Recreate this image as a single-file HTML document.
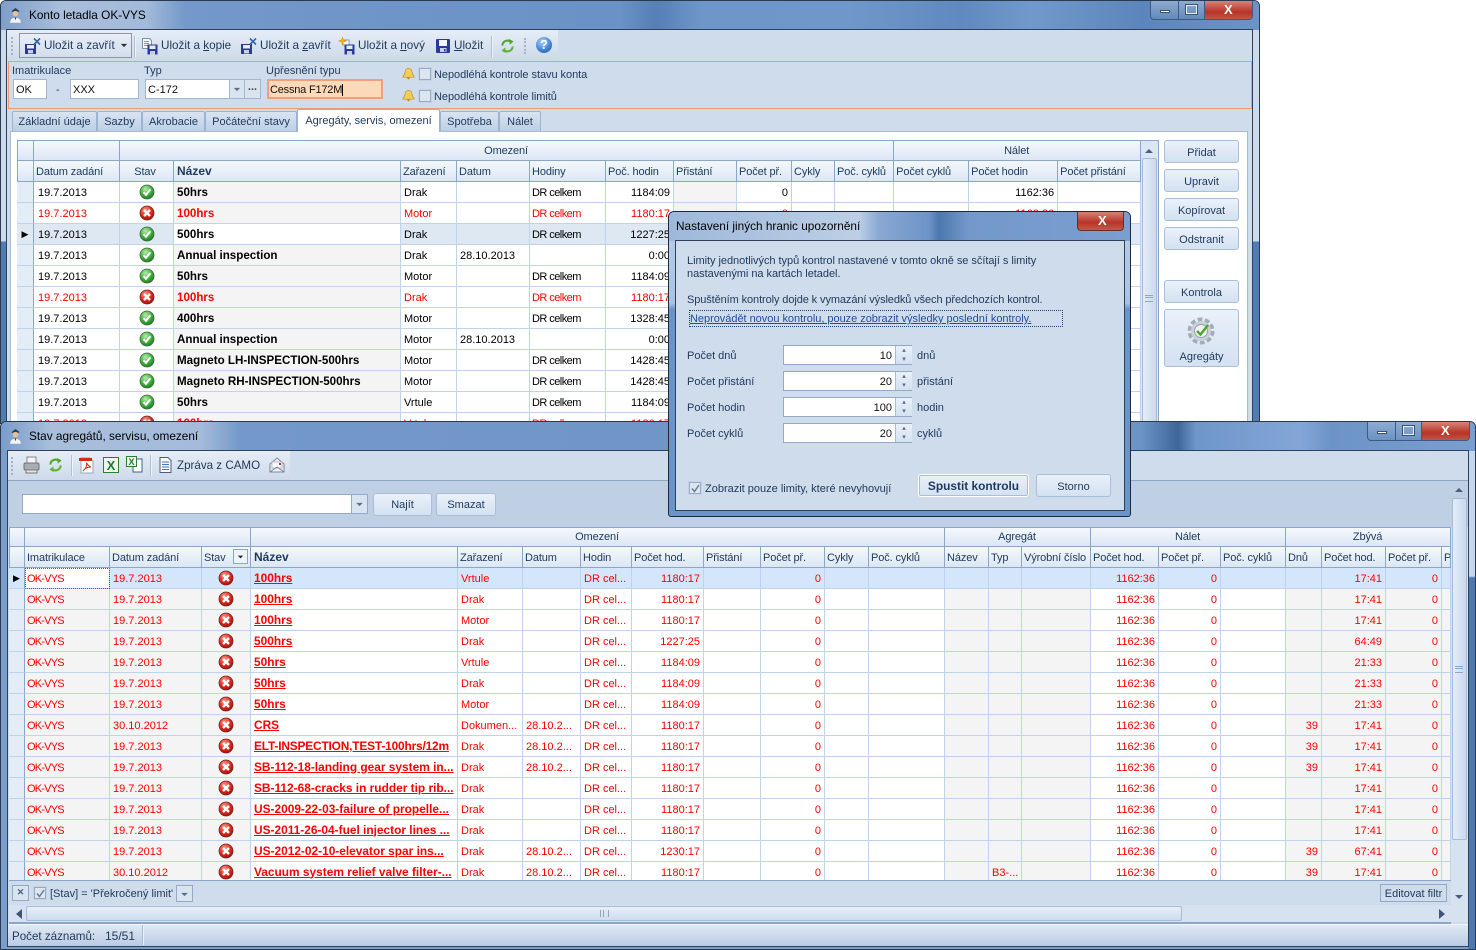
<!DOCTYPE html>
<html lang="cs"><head><meta charset="utf-8"><title>Konto letadla OK-VYS</title>
<style>
html,body{margin:0;padding:0;background:#fff;width:1476px;height:950px;overflow:hidden}
body{position:relative;font:11px/13px "Liberation Sans",sans-serif;color:#1e395b}
.a,.t,.in,.b,.x{position:absolute}
.t{white-space:nowrap}
.tb{font-size:11.7px}
.win{position:absolute;overflow:hidden;border:1px solid #2b3a4e;box-sizing:border-box}
.in{background:#fff;border:1px solid #a2b6d0;box-sizing:border-box;height:20px;line-height:18px;padding-left:2px;padding-top:1px;color:#111;white-space:nowrap}
.b{background:linear-gradient(#eaf1f9,#d3e1f1);border:1px solid #a9bfd9;border-radius:3px;box-sizing:border-box;text-align:center;height:23px;line-height:23px;color:#1e395b}
.cb{position:absolute;width:12px;height:12px;box-sizing:border-box;border:1px solid #93aac8;background:#dde5ef;outline:1px solid #c5d3e5;outline-offset:0}
.grip{position:absolute;width:2px;border-left:2px dotted #9fb3cf}
.sep{position:absolute;width:1px;background:#aebfd6;border-right:1px solid #eef3f9}
svg{display:block}
svg.a{position:absolute}
table{position:absolute;border-collapse:separate;border-spacing:0;table-layout:fixed;color:#000;background:#fff}
td,th{box-sizing:border-box;height:21px;padding:2px 3px 0;overflow:hidden;white-space:nowrap;font-weight:normal;text-align:left;border-right:1px solid #bfd3ee;border-bottom:1px solid #bfd3ee}
th{background:linear-gradient(#f4f8fc,#dce7f4);border-right:1px solid #8ca6c8;border-bottom:1px solid #8ca6c8;color:#1e395b;padding-left:2px;letter-spacing:-.12px}
th.c{text-align:center}
th.bn{font-weight:bold;font-size:12px;padding:0 3px;letter-spacing:0}
tr.h1 th{height:20px;border-top:1px solid #8ca6c8;padding-top:0}
#g1 tr.h1 th{height:21px;padding-top:1px}
td.i{background:#e3ecf7;border-right:1px solid #8ca6c8;padding:0}
td.g{background:#f4f4f4}
td.r{text-align:right}
td.c{text-align:center;padding:0}
td.c svg{display:inline-block;vertical-align:middle;width:16px;height:16px}
td.n{font-weight:bold;font-size:11.6px;padding-top:0}
#g1 td:nth-child(2){padding-left:4px}
#g1 td:nth-child(7){letter-spacing:-.55px;padding-left:2px}
tr.e td{color:#f00}
tr.s td{background:#dde8f3}
tr.s td.n{background:#fff}
#g2 tr.s td{background:#d4e6fc}
#g2 td.n{text-decoration:underline;padding-right:0;font-size:11.9px}
#g2 td{color:#f00}
#g2 td:nth-child(2){letter-spacing:-.8px;padding-left:2px}
.tab{position:absolute;top:111px;height:20px;background:linear-gradient(#d9e4f1,#bccfe5);border:1px solid #9db4d1;border-bottom:0;box-sizing:border-box;text-align:center;line-height:21px;border-radius:2px 2px 0 0}
.sb{position:absolute;background:linear-gradient(90deg,#e4edf7,#c9d9ec);border:1px solid #a5bbd6;border-radius:2px;box-sizing:border-box}
.mx{left:35px;top:5px;width:11px;height:9px;border:1px solid #e8eef6;outline:1px solid #39506f;box-sizing:border-box}
</style></head><body>
<svg width="0" height="0" style="position:absolute"><defs>
<radialGradient id="gg" cx=".4" cy=".3" r=".8"><stop offset="0" stop-color="#b6ecaa"/><stop offset=".55" stop-color="#3fae3a"/><stop offset="1" stop-color="#14701c"/></radialGradient>
<radialGradient id="gr" cx=".4" cy=".3" r=".8"><stop offset="0" stop-color="#ff9a8a"/><stop offset=".55" stop-color="#e0251a"/><stop offset="1" stop-color="#8e0f0a"/></radialGradient>
<symbol id="o" viewBox="0 0 16 16"><circle cx="8" cy="8" r="7" fill="url(#gg)" stroke="#3c6b3c" stroke-width=".8"/><path d="M4.6 8.2l2.4 2.6 4.4-5.600" stroke="#fff" stroke-width="2" fill="none"/></symbol>
<symbol id="e" viewBox="0 0 16 16"><circle cx="8" cy="8" r="7" fill="url(#gr)" stroke="#6e2a25" stroke-width=".8"/><path d="M5 5l6 6M11 5l-6 6" stroke="#fff" stroke-width="2.400" fill="none"/></symbol>
<symbol id="f" viewBox="0 0 16 16"><rect x="1" y="1" width="14" height="14" rx="1" fill="#2a3a9a"/><rect x="4" y="2" width="8" height="6" fill="#f4f6fb"/><rect x="5" y="10" width="6.500" height="4" fill="#c6cfe6"/><rect x="9" y="11" width="1.500" height="2.500" fill="#2a3a9a"/></symbol>
<symbol id="sx" viewBox="0 0 18 18"><rect x="1" y="7" width="11" height="10" fill="#2a3a9a"/><rect x="3" y="8" width="7" height="3.500" fill="#e8ecf6"/><rect x="4" y="13" width="5" height="3.500" fill="#c6cfe6"/><path d="M10 1.500l6 6M16 1.500l-6 6" stroke="#33649f" stroke-width="1.600"/></symbol>
<symbol id="sc" viewBox="0 0 18 18"><path d="M1.500 1.500h7l2 2v8h-9z" fill="#f4f7fb" stroke="#7d8fa8"/><path d="M3 4.500h5M3 6.500h5M3 8.500h4" stroke="#6f9bcc"/><rect x="6.500" y="7.500" width="10" height="10" fill="#2a3a9a"/><rect x="8.500" y="8.500" width="6" height="3.500" fill="#e8ecf6"/><rect x="9" y="14" width="5" height="3.500" fill="#c6cfe6"/></symbol>
<symbol id="sn" viewBox="0 0 18 18"><path d="M5 3h6v5H5z" fill="#fff" stroke="#8798b0"/><rect x="6.500" y="7.500" width="10" height="10" fill="#2a3a9a"/><rect x="8.500" y="8.500" width="6" height="3.500" fill="#e8ecf6"/><rect x="9" y="14" width="5" height="3.500" fill="#c6cfe6"/><path d="M4.500 0l1 3 3 1-3 1-1 3-1-3-3-1 3-1z" fill="#f7b500" stroke="#e88a00" stroke-width=".5"/></symbol>
<symbol id="rf" viewBox="0 0 16 16"><path d="M2.500 7.500A5.500 5.500 0 0 1 11.500 3.500" stroke="#4da82c" stroke-width="2.200" fill="none"/><path d="M9.500 0.500l5 2.500-4 3.500z" fill="#4da82c"/><path d="M13.500 8.500A5.500 5.500 0 0 1 4.500 12.500" stroke="#5eb636" stroke-width="2.200" fill="none"/><path d="M6.500 15.500l-5-2.500 4-3.500z" fill="#5eb636"/></symbol>
<symbol id="bl" viewBox="0 0 14 14"><path d="M7 1.500c-2.500 0-3.800 1.900-3.800 4.200 0 2.200-1 3-2.200 4.100v1.200h12V9.800c-1.200-1.100-2.200-1.900-2.200-4.100C10.800 3.400 9.500 1.500 7 1.500z" fill="#f5cc55" stroke="#b98a1e" stroke-width=".7"/><circle cx="7" cy="12" r="1.300" fill="#c2901f"/></symbol>
<symbol id="pi" viewBox="0 0 16 18"><path d="M4 4l4-3 4 3v1H4z" fill="#2c3e55"/><circle cx="8" cy="7" r="3" fill="#e6bf9b"/><path d="M2 17c0-4 2.500-6 6-6s6 2 6 6z" fill="#f1f3f6" stroke="#9aa6b6" stroke-width=".6"/><path d="M7 11l1 3 1-3z" fill="#2c3e55"/></symbol>
<symbol id="ar" viewBox="0 0 10 6"><path d="M1 1h8L5 5z" fill="currentColor"/></symbol>
</defs></svg>

<!-- WINDOW 1 -->
<div class="win" style="left:0;top:0;width:1260px;height:424px;border-radius:6px 6px 0 0;background:linear-gradient(#cbdaec 0,#cbdaec 240px,#4f7cb5 241px,#4f7cb5 100%)">
 <div class="a" style="left:0;top:0;width:100%;height:29px;background:linear-gradient(90deg,#7e9ec9 0,#a8bedb 60px,#a3bada 145px,#7398c9 185px,#6a92c6 620px,#557fb5 655px,#6e96c9 700px,#7097c9 850px,#5f89bf 960px,#7199cb 1030px,#5c85bb 1140px,#6d94c7 1259px)"></div>
 <svg class="a" style="left:7px;top:6px" width="15" height="17"><use href="#pi"/></svg>
 <div class="t" style="left:28px;top:8px;font-size:11.8px;color:#000">Konto letadla OK-VYS</div>
 <div class="a" style="left:1149px;top:-1px;width:103px;height:20px;border:1px solid #3f5a80;border-top:0;border-radius:0 0 4px 4px;box-sizing:border-box;overflow:hidden;background:linear-gradient(#8fadd3,#6289ba)">
  <div class="a" style="left:54px;top:0;width:48px;height:20px;background:linear-gradient(#d98a80,#b73426 60%,#c05a4d)"></div>
  <div class="a" style="left:27px;top:0;width:1px;height:20px;background:#3f5a80"></div>
  <div class="a" style="left:53px;top:0;width:1px;height:20px;background:#3f5a80"></div>
  <div class="a" style="left:9px;top:10px;width:10px;height:3px;background:#fff;border:1px solid #39506f;box-sizing:border-box"></div>
  <div class="a mx"></div>
  <div class="t" style="left:73px;top:3px;font:bold 13px/13px 'Liberation Sans',sans-serif;color:#fff">X</div>
 </div>
 <!-- inner -->
 <div class="a" style="left:5px;top:28px;width:1247px;height:400px;background:#cfdcec;border:1px solid #2f4159;box-sizing:border-box"></div>
 <div class="a" style="left:6px;top:29px;width:551px;height:30px;background:linear-gradient(#e6edf6,#cddaea)"></div>
 <div class="grip" style="left:10px;top:36px;height:18px"></div>
 <div class="a" style="left:18px;top:32px;width:113px;height:25px;border:1px solid #8d96a1;box-sizing:border-box;background:linear-gradient(#e8eef6,#d3deec)"></div>
 <svg class="a" style="left:23px;top:36px" width="18" height="18"><use href="#sx"/></svg>
 <div class="t tb" style="left:43px;top:38px">Uložit a zavřít</div>
 <svg class="a" style="left:119px;top:42px;color:#333" width="8" height="5"><use href="#ar"/></svg>
 <div class="sep" style="left:133px;top:35px;height:21px"></div>
 <svg class="a" style="left:140px;top:36px" width="18" height="18"><use href="#sc"/></svg>
 <div class="t tb" style="left:160px;top:38px">Uložit a <u>k</u>opie</div>
 <svg class="a" style="left:239px;top:36px" width="18" height="18"><use href="#sx"/></svg>
 <div class="t tb" style="left:259px;top:38px">Uložit a <u>z</u>avřít</div>
 <svg class="a" style="left:337px;top:36px" width="18" height="18"><use href="#sn"/></svg>
 <div class="t tb" style="left:357px;top:38px">Uložit a <u>n</u>ový</div>
 <svg class="a" style="left:434px;top:37px" width="16" height="16"><use href="#f"/></svg>
 <div class="t tb" style="left:453px;top:38px"><u>U</u>ložit</div>
 <div class="sep" style="left:490px;top:35px;height:21px"></div>
 <svg class="a" style="left:499px;top:37px" width="15" height="16"><use href="#rf"/></svg>
 <div class="grip" style="left:523px;top:37px;height:16px"></div>
 <div class="a" style="left:535px;top:36px;width:16px;height:16px;border-radius:50%;background:radial-gradient(circle at 40% 30%,#a9d2f7,#3b7fd0 60%,#1d5aa6);color:#fff;font:bold 13px/16px 'Liberation Sans',sans-serif;text-align:center">?</div>
 <!-- orange panel -->
 <div class="a" style="left:7px;top:60px;width:1244px;height:48px;border:1px solid #ef9a72;box-sizing:border-box"></div>
 <div class="t" style="left:11px;top:64px">Imatrikulace</div>
 <div class="in" style="left:12px;top:78px;width:34px">OK</div>
 <div class="t" style="left:55px;top:83px">-</div>
 <div class="in" style="left:69px;top:78px;width:69px">XXX</div>
 <div class="t" style="left:143px;top:64px">Typ</div>
 <div class="in" style="left:144px;top:78px;width:100px">C-172</div>
 <div class="in" style="left:228px;top:78px;width:16px;background:#d9e4f1;padding:0"><svg class="a" style="left:3px;top:7px;color:#5a6f8e" width="8" height="5"><use href="#ar"/></svg></div>
 <div class="in" style="left:243px;top:78px;width:17px;background:#d9e4f1;padding:0;text-align:center;line-height:14px;font-weight:bold;color:#445">...</div>
 <div class="t" style="left:265px;top:64px">Upřesnění typu</div>
 <div class="in" style="left:266px;top:78px;width:116px;background:#fcd9b8;border:2px solid #f0a077;line-height:16px;padding-left:1px;padding-top:1px;letter-spacing:-.2px">Cessna F172M<span style="border-left:1px solid #000"></span></div>
 <svg class="a" style="left:401px;top:66px" width="13" height="13"><use href="#bl"/></svg>
 <div class="cb" style="left:418px;top:67px"></div>
 <div class="t" style="left:433px;top:68px;letter-spacing:-.05px">Nepodléhá kontrole stavu konta</div>
 <svg class="a" style="left:401px;top:88px" width="13" height="13"><use href="#bl"/></svg>
 <div class="cb" style="left:418px;top:89px"></div>
 <div class="t" style="left:433px;top:90px;letter-spacing:-.05px">Nepodléhá kontrole limitů</div>
 <!-- tabs -->
 <div class="a" style="left:9px;top:130px;width:1238px;height:300px;background:#fff;border:1px solid #a5bbd6;box-sizing:border-box"></div>
 <div class="tab" style="left:11px;width:85px;top:110px">Základní údaje</div>
 <div class="tab" style="left:96px;width:45px;top:110px">Sazby</div>
 <div class="tab" style="left:141px;width:63px;top:110px">Akrobacie</div>
 <div class="tab" style="left:204px;width:92px;top:110px">Počáteční stavy</div>
 <div class="tab" style="left:296px;width:143px;top:108px;height:23px;background:#fff;line-height:22px;z-index:2">Agregáty, servis, omezení</div>
 <div class="tab" style="left:439px;width:59px;top:110px">Spotřeba</div>
 <div class="tab" style="left:498px;width:42px;top:110px">Nálet</div>
 <!-- grid 1 -->
 <table id="g1" style="left:16px;top:139px;width:1124px">
 <colgroup><col style="width:17px"><col style="width:86px"><col style="width:54px"><col style="width:227px"><col style="width:56px"><col style="width:73px"><col style="width:76px"><col style="width:68px"><col style="width:63px"><col style="width:55px"><col style="width:43px"><col style="width:59px"><col style="width:75px"><col style="width:89px"><col style="width:83px"></colgroup>
 <tr class="h1"><th style="border-left:1px solid #8ca6c8"></th><th></th><th class="c" colspan="10">Omezení</th><th class="c" colspan="3">Nálet</th></tr>
 <tr><th style="border-left:1px solid #8ca6c8"></th><th>Datum zadání</th><th class="c" style="padding-right:5px">Stav</th><th class="bn">Název</th><th>Zařazení</th><th>Datum</th><th>Hodiny</th><th>Poč. hodin</th><th>Přistání</th><th>Počet př.</th><th>Cykly</th><th>Poč. cyklů</th><th>Počet cyklů</th><th>Počet hodin</th><th>Počet přistání</th></tr>
 <tr><td class="i"></td><td>19.7.2013</td><td class="c"><svg><use href="#o"/></svg></td><td class="n g">50hrs</td><td>Drak</td><td></td><td>DR celkem</td><td class="r">1184:09</td><td class="g"></td><td class="r">0</td><td></td><td></td><td></td><td class="r">1162:36</td><td></td></tr>
 <tr class="e"><td class="i"></td><td>19.7.2013</td><td class="c"><svg><use href="#e"/></svg></td><td class="n g">100hrs</td><td>Motor</td><td></td><td>DR celkem</td><td class="r">1180:17</td><td class="g"></td><td class="r">0</td><td></td><td></td><td></td><td class="r">1162:36</td><td></td></tr>
 <tr class="s"><td class="i" style="text-align:center;font-size:9px;color:#000">&#9654;</td><td>19.7.2013</td><td class="c"><svg><use href="#o"/></svg></td><td class="n">500hrs</td><td>Drak</td><td></td><td>DR celkem</td><td class="r">1227:25</td><td></td><td></td><td></td><td></td><td></td><td></td><td></td></tr>
 <tr><td class="i"></td><td>19.7.2013</td><td class="c"><svg><use href="#o"/></svg></td><td class="n g">Annual inspection</td><td>Drak</td><td>28.10.2013</td><td></td><td class="r">0:00</td><td class="g"></td><td></td><td></td><td></td><td></td><td></td><td></td></tr>
 <tr><td class="i"></td><td>19.7.2013</td><td class="c"><svg><use href="#o"/></svg></td><td class="n g">50hrs</td><td>Motor</td><td></td><td>DR celkem</td><td class="r">1184:09</td><td class="g"></td><td></td><td></td><td></td><td></td><td></td><td></td></tr>
 <tr class="e"><td class="i"></td><td>19.7.2013</td><td class="c"><svg><use href="#e"/></svg></td><td class="n g">100hrs</td><td>Drak</td><td></td><td>DR celkem</td><td class="r">1180:17</td><td class="g"></td><td></td><td></td><td></td><td></td><td></td><td></td></tr>
 <tr><td class="i"></td><td>19.7.2013</td><td class="c"><svg><use href="#o"/></svg></td><td class="n g">400hrs</td><td>Motor</td><td></td><td>DR celkem</td><td class="r">1328:45</td><td class="g"></td><td></td><td></td><td></td><td></td><td></td><td></td></tr>
 <tr><td class="i"></td><td>19.7.2013</td><td class="c"><svg><use href="#o"/></svg></td><td class="n g">Annual inspection</td><td>Motor</td><td>28.10.2013</td><td></td><td class="r">0:00</td><td class="g"></td><td></td><td></td><td></td><td></td><td></td><td></td></tr>
 <tr><td class="i"></td><td>19.7.2013</td><td class="c"><svg><use href="#o"/></svg></td><td class="n g">Magneto LH-INSPECTION-500hrs</td><td>Motor</td><td></td><td>DR celkem</td><td class="r">1428:45</td><td class="g"></td><td></td><td></td><td></td><td></td><td></td><td></td></tr>
 <tr><td class="i"></td><td>19.7.2013</td><td class="c"><svg><use href="#o"/></svg></td><td class="n g">Magneto RH-INSPECTION-500hrs</td><td>Motor</td><td></td><td>DR celkem</td><td class="r">1428:45</td><td class="g"></td><td></td><td></td><td></td><td></td><td></td><td></td></tr>
 <tr><td class="i"></td><td>19.7.2013</td><td class="c"><svg><use href="#o"/></svg></td><td class="n g">50hrs</td><td>Vrtule</td><td></td><td>DR celkem</td><td class="r">1184:09</td><td class="g"></td><td></td><td></td><td></td><td></td><td></td><td></td></tr>
 <tr class="e"><td class="i"></td><td>19.7.2013</td><td class="c"><svg><use href="#e"/></svg></td><td class="n g">100hrs</td><td>Vrtule</td><td></td><td>DR celkem</td><td class="r">1180:17</td><td class="g"></td><td></td><td></td><td></td><td></td><td></td><td></td></tr>
 </table>
 <!-- scrollbar 1 -->
 <div class="a" style="left:1140px;top:139px;width:18px;height:290px;background:#dbe6f3;border-right:1px solid #8ca6c8;border-top:1px solid #8ca6c8;box-sizing:border-box"></div>
 <svg class="a" style="left:1143px;top:147px;color:#4a5f80;transform:rotate(180deg)" width="10" height="6"><use href="#ar"/></svg>
 <div class="sb" style="left:1141px;top:157px;width:15px;height:272px"></div>
 <div class="a" style="left:1144px;top:294px;width:8px;height:5px;border-top:1px solid #8ca6c8;border-bottom:1px solid #8ca6c8"><div style="height:1px;margin-top:1px;background:#8ca6c8"></div></div>
 <!-- buttons -->
 <div class="b" style="left:1163px;top:139px;width:75px;line-height:24px">Přidat</div>
 <div class="b" style="left:1163px;top:168px;width:75px;line-height:24px">Upravit</div>
 <div class="b" style="left:1163px;top:197px;width:75px;line-height:24px">Kopírovat</div>
 <div class="b" style="left:1163px;top:226px;width:75px;line-height:24px">Odstranit</div>
 <div class="b" style="left:1163px;top:279px;width:75px;line-height:24px">Kontrola</div>
 <div class="b" style="left:1163px;top:308px;width:75px;height:58px;line-height:13px;padding-top:41px">Agregáty</div>
 <svg class="a" style="left:1186px;top:315px" width="28" height="30" viewBox="0 0 28 30"><circle cx="14" cy="15" r="11" fill="none" stroke="#a3acb8" stroke-width="5" stroke-dasharray="4.500 2.400"/><circle cx="14" cy="15" r="10" fill="#c9d0d8"/><circle cx="14" cy="15" r="6.500" fill="#eef1f5" stroke="#98a3b1"/><path d="M10 15l3.500 3.500L21 9" stroke="#4da82c" stroke-width="2.500" fill="none"/></svg>
</div>

<!-- WINDOW 2 -->
<div class="win" style="left:0;top:421px;width:1476px;height:529px;border-radius:6px 6px 0 0;background:#7a9ecb">
 <div class="a" style="left:0;top:0;width:100%;height:29px;background:linear-gradient(90deg,#7a9ccb 0,#a8bedb 50px,#a5bbdb 200px,#7398c9 240px,#6c94c7 1140px,#3e6698 1177px,#6e96c9 1195px,#83a6d6 1300px,#6d94c7 1330px,#7a9ecf 1475px)"></div>
 <div class="a" style="left:1467px;top:29px;width:8px;height:500px;background:linear-gradient(#c5d7ed 0,#c5d7ed 125px,#4d78b0 127px,#4d78b0 100%)"></div>
 <svg class="a" style="left:7px;top:6px" width="15" height="17"><use href="#pi"/></svg>
 <div class="t" style="left:28px;top:8px;font-size:11.8px;color:#000">Stav agregátů, servisu, omezení</div>
 <div class="a" style="left:1366px;top:-1px;width:103px;height:20px;border:1px solid #3f5a80;border-top:0;border-radius:0 0 4px 4px;box-sizing:border-box;overflow:hidden;background:linear-gradient(#8fadd3,#6b92c4)">
  <div class="a" style="left:54px;top:0;width:48px;height:20px;background:linear-gradient(#d98a80,#b73426 60%,#c05a4d)"></div>
  <div class="a" style="left:27px;top:0;width:1px;height:20px;background:#3f5a80"></div>
  <div class="a" style="left:53px;top:0;width:1px;height:20px;background:#3f5a80"></div>
  <div class="a" style="left:9px;top:10px;width:10px;height:3px;background:#fff;border:1px solid #39506f;box-sizing:border-box"></div>
  <div class="a mx"></div>
  <div class="t" style="left:73px;top:3px;font:bold 13px/13px 'Liberation Sans',sans-serif;color:#fff">X</div>
 </div>
 <div class="a" style="left:6px;top:28px;width:1462px;height:497px;background:#cfdcec;border:1px solid #2f4159;box-sizing:border-box"></div>
 <div class="a" style="left:7px;top:29px;width:282px;height:29px;background:linear-gradient(#e6edf6,#cddaea)"></div>
 <div class="a" style="left:7px;top:58px;width:1460px;height:1px;background:#8ea5c4"></div>
 <div class="a" style="left:7px;top:59px;width:1460px;height:46px;background:#bfd0e5"></div>
 <div class="grip" style="left:10px;top:35px;height:18px"></div>
 <!-- printer -->
 <svg class="a" style="left:22px;top:34px" width="17" height="18" viewBox="0 0 17 18"><path d="M4 1h9v6H4z" fill="#f4f4f4" stroke="#8a8a8a"/><rect x="1" y="7" width="15" height="7" rx="1.500" fill="#a8adb3" stroke="#6d7278"/><path d="M3 14h11v3H3z" fill="#e2e4e7" stroke="#777"/></svg>
 <svg class="a" style="left:47px;top:35px" width="15" height="16"><use href="#rf"/></svg>
 <div class="sep" style="left:70px;top:33px;height:21px"></div>
 <!-- pdf -->
 <svg class="a" style="left:78px;top:35px" width="16" height="17" viewBox="0 0 16 17"><path d="M2 1h9l3 3v12H2z" fill="#fff" stroke="#9aa5b5"/><rect x="0" y="1" width="13" height="3" fill="#d32a1c"/><path d="M4 14c3-2 4-6 3.500-8C7 5 9 9 12 10c-3 0-6 1-8 4z" fill="none" stroke="#d32a1c"/></svg>
 <!-- excel -->
 <svg class="a" style="left:102px;top:35px" width="16" height="16" viewBox="0 0 16 16"><rect x=".5" y=".5" width="15" height="15" fill="#eef6ec" stroke="#2e7d32"/><text x="8" y="13" text-anchor="middle" font-family="Liberation Sans,sans-serif" font-weight="bold" font-size="13" fill="#1f7a2f">X</text></svg>
 <svg class="a" style="left:125px;top:34px" width="17" height="17" viewBox="0 0 17 17"><rect x="7" y="3" width="9" height="13" fill="#fff" stroke="#3e5f90"/><rect x=".5" y=".5" width="10" height="10" fill="#eef6ec" stroke="#2e7d32"/><text x="5.500" y="9" text-anchor="middle" font-family="Liberation Sans,sans-serif" font-weight="bold" font-size="9" fill="#1f7a2f">X</text></svg>
 <div class="sep" style="left:149px;top:33px;height:21px"></div>
 <svg class="a" style="left:158px;top:35px" width="13" height="16" viewBox="0 0 13 16"><path d="M1 .5h8l3 3v12H1z" fill="#f6f8fc" stroke="#4a5f80"/><path d="M3 5h7M3 7.500h7M3 10h7M3 12.500h7" stroke="#3f7ac8"/></svg>
 <div class="t" style="left:176px;top:37px;font-size:11.6px">Zpráva z CAMO</div>
 <svg class="a" style="left:268px;top:35px" width="16" height="16" viewBox="0 0 16 16"><path d="M1 7l7-6 7 6v8H1z" fill="#eef2f7" stroke="#7b8797"/><rect x="3" y="5" width="10" height="6" fill="#fff" stroke="#b4bcc8"/><rect x="10" y="6" width="2" height="2" fill="#d33"/><path d="M1 15l7-5 7 5" fill="none" stroke="#7b8797"/></svg>
 <!-- search -->
 <div class="in" style="left:21px;top:72px;width:346px;border-color:#93a9c7"></div>
 <div class="in" style="left:350px;top:72px;width:17px;background:#d9e4f1;padding:0;border-color:#93a9c7"><svg class="a" style="left:3px;top:7px;color:#5a6f8e" width="9" height="5"><use href="#ar"/></svg></div>
 <div class="b" style="left:372px;top:71px;width:59px">Najít</div>
 <div class="b" style="left:435px;top:71px;width:60px">Smazat</div>
 <!-- grid 2 -->
 <table id="g2" style="left:8px;top:105px;width:1442px">
 <colgroup><col style="width:16px"><col style="width:85px"><col style="width:92px"><col style="width:49px"><col style="width:207px"><col style="width:65px"><col style="width:58px"><col style="width:51px"><col style="width:72px"><col style="width:57px"><col style="width:64px"><col style="width:44px"><col style="width:76px"><col style="width:44px"><col style="width:33px"><col style="width:69px"><col style="width:68px"><col style="width:62px"><col style="width:65px"><col style="width:36px"><col style="width:64px"><col style="width:56px"><col style="width:9px"></colgroup>
 <tr class="h1"><th style="border-left:1px solid #8ca6c8"></th><th colspan="3"></th><th class="c" colspan="9">Omezení</th><th class="c" colspan="3">Agregát</th><th class="c" colspan="3">Nálet</th><th class="c" colspan="4">Zbývá</th></tr>
 <tr><th style="border-left:1px solid #8ca6c8"></th><th>Imatrikulace</th><th>Datum zadání</th><th style="position:relative">Stav<span class="a" style="left:31px;top:2px;width:15px;height:15px;box-sizing:border-box;border:1px solid #8ca6c8;background:#eef3f9"><svg class="a" style="left:3px;top:5px;color:#222" width="7" height="4"><use href="#ar"/></svg></span></th><th class="bn">Název</th><th>Zařazení</th><th>Datum</th><th>Hodin</th><th>Počet hod.</th><th>Přistání</th><th>Počet př.</th><th>Cykly</th><th>Poč. cyklů</th><th>Název</th><th>Typ</th><th>Výrobní číslo</th><th>Počet hod.</th><th>Počet př.</th><th>Poč. cyklů</th><th>Dnů</th><th>Počet hod.</th><th>Počet př.</th><th style="padding:2px 0 0 2px">P</th></tr>
 <tr class="s"><td class="i" style="text-align:center;font-size:9px;color:#000">&#9654;</td><td style="outline:1px dotted #e22;outline-offset:-1px;background:#fff">OK-VYS</td><td>19.7.2013</td><td class="c"><svg><use href="#e"/></svg></td><td class="n">100hrs</td><td>Vrtule</td><td></td><td>DR cel...</td><td class="r">1180:17</td><td></td><td class="r">0</td><td></td><td></td><td></td><td></td><td></td><td class="r">1162:36</td><td class="r">0</td><td></td><td></td><td class="r">17:41</td><td class="r">0</td><td></td></tr>
 <tr><td class="i"></td><td class="g">OK-VYS</td><td class="g">19.7.2013</td><td class="c g"><svg><use href="#e"/></svg></td><td class="n">100hrs</td><td>Drak</td><td></td><td>DR cel...</td><td class="r">1180:17</td><td></td><td class="r">0</td><td></td><td></td><td class="g"></td><td class="g"></td><td class="g"></td><td class="r">1162:36</td><td class="r">0</td><td></td><td class="g"></td><td class="r g">17:41</td><td class="r g">0</td><td class="g"></td></tr>
 <tr><td class="i"></td><td class="g">OK-VYS</td><td class="g">19.7.2013</td><td class="c g"><svg><use href="#e"/></svg></td><td class="n">100hrs</td><td>Motor</td><td></td><td>DR cel...</td><td class="r">1180:17</td><td></td><td class="r">0</td><td></td><td></td><td class="g"></td><td class="g"></td><td class="g"></td><td class="r">1162:36</td><td class="r">0</td><td></td><td class="g"></td><td class="r g">17:41</td><td class="r g">0</td><td class="g"></td></tr>
 <tr><td class="i"></td><td class="g">OK-VYS</td><td class="g">19.7.2013</td><td class="c g"><svg><use href="#e"/></svg></td><td class="n">500hrs</td><td>Drak</td><td></td><td>DR cel...</td><td class="r">1227:25</td><td></td><td class="r">0</td><td></td><td></td><td class="g"></td><td class="g"></td><td class="g"></td><td class="r">1162:36</td><td class="r">0</td><td></td><td class="g"></td><td class="r g">64:49</td><td class="r g">0</td><td class="g"></td></tr>
 <tr><td class="i"></td><td class="g">OK-VYS</td><td class="g">19.7.2013</td><td class="c g"><svg><use href="#e"/></svg></td><td class="n">50hrs</td><td>Vrtule</td><td></td><td>DR cel...</td><td class="r">1184:09</td><td></td><td class="r">0</td><td></td><td></td><td class="g"></td><td class="g"></td><td class="g"></td><td class="r">1162:36</td><td class="r">0</td><td></td><td class="g"></td><td class="r g">21:33</td><td class="r g">0</td><td class="g"></td></tr>
 <tr><td class="i"></td><td class="g">OK-VYS</td><td class="g">19.7.2013</td><td class="c g"><svg><use href="#e"/></svg></td><td class="n">50hrs</td><td>Drak</td><td></td><td>DR cel...</td><td class="r">1184:09</td><td></td><td class="r">0</td><td></td><td></td><td class="g"></td><td class="g"></td><td class="g"></td><td class="r">1162:36</td><td class="r">0</td><td></td><td class="g"></td><td class="r g">21:33</td><td class="r g">0</td><td class="g"></td></tr>
 <tr><td class="i"></td><td class="g">OK-VYS</td><td class="g">19.7.2013</td><td class="c g"><svg><use href="#e"/></svg></td><td class="n">50hrs</td><td>Motor</td><td></td><td>DR cel...</td><td class="r">1184:09</td><td></td><td class="r">0</td><td></td><td></td><td class="g"></td><td class="g"></td><td class="g"></td><td class="r">1162:36</td><td class="r">0</td><td></td><td class="g"></td><td class="r g">21:33</td><td class="r g">0</td><td class="g"></td></tr>
 <tr><td class="i"></td><td class="g">OK-VYS</td><td class="g">30.10.2012</td><td class="c g"><svg><use href="#e"/></svg></td><td class="n">CRS</td><td>Dokumen...</td><td>28.10.2...</td><td>DR cel...</td><td class="r">1180:17</td><td></td><td class="r">0</td><td></td><td></td><td class="g"></td><td class="g"></td><td class="g"></td><td class="r">1162:36</td><td class="r">0</td><td></td><td class="r g">39</td><td class="r g">17:41</td><td class="r g">0</td><td class="g"></td></tr>
 <tr><td class="i"></td><td class="g">OK-VYS</td><td class="g">19.7.2013</td><td class="c g"><svg><use href="#e"/></svg></td><td class="n" style="letter-spacing:-.17px">ELT-INSPECTION,TEST-100hrs/12m</td><td>Drak</td><td>28.10.2...</td><td>DR cel...</td><td class="r">1180:17</td><td></td><td class="r">0</td><td></td><td></td><td class="g"></td><td class="g"></td><td class="g"></td><td class="r">1162:36</td><td class="r">0</td><td></td><td class="r g">39</td><td class="r g">17:41</td><td class="r g">0</td><td class="g"></td></tr>
 <tr><td class="i"></td><td class="g">OK-VYS</td><td class="g">19.7.2013</td><td class="c g"><svg><use href="#e"/></svg></td><td class="n">SB-112-18-landing gear system in...</td><td>Drak</td><td>28.10.2...</td><td>DR cel...</td><td class="r">1180:17</td><td></td><td class="r">0</td><td></td><td></td><td class="g"></td><td class="g"></td><td class="g"></td><td class="r">1162:36</td><td class="r">0</td><td></td><td class="r g">39</td><td class="r g">17:41</td><td class="r g">0</td><td class="g"></td></tr>
 <tr><td class="i"></td><td class="g">OK-VYS</td><td class="g">19.7.2013</td><td class="c g"><svg><use href="#e"/></svg></td><td class="n">SB-112-68-cracks in rudder tip rib...</td><td>Drak</td><td></td><td>DR cel...</td><td class="r">1180:17</td><td></td><td class="r">0</td><td></td><td></td><td class="g"></td><td class="g"></td><td class="g"></td><td class="r">1162:36</td><td class="r">0</td><td></td><td class="g"></td><td class="r g">17:41</td><td class="r g">0</td><td class="g"></td></tr>
 <tr><td class="i"></td><td class="g">OK-VYS</td><td class="g">19.7.2013</td><td class="c g"><svg><use href="#e"/></svg></td><td class="n">US-2009-22-03-failure of propelle...</td><td>Drak</td><td></td><td>DR cel...</td><td class="r">1180:17</td><td></td><td class="r">0</td><td></td><td></td><td class="g"></td><td class="g"></td><td class="g"></td><td class="r">1162:36</td><td class="r">0</td><td></td><td class="g"></td><td class="r g">17:41</td><td class="r g">0</td><td class="g"></td></tr>
 <tr><td class="i"></td><td class="g">OK-VYS</td><td class="g">19.7.2013</td><td class="c g"><svg><use href="#e"/></svg></td><td class="n">US-2011-26-04-fuel injector lines ...</td><td>Drak</td><td></td><td>DR cel...</td><td class="r">1180:17</td><td></td><td class="r">0</td><td></td><td></td><td class="g"></td><td class="g"></td><td class="g"></td><td class="r">1162:36</td><td class="r">0</td><td></td><td class="g"></td><td class="r g">17:41</td><td class="r g">0</td><td class="g"></td></tr>
 <tr><td class="i"></td><td class="g">OK-VYS</td><td class="g">19.7.2013</td><td class="c g"><svg><use href="#e"/></svg></td><td class="n">US-2012-02-10-elevator spar ins...</td><td>Drak</td><td>28.10.2...</td><td>DR cel...</td><td class="r">1230:17</td><td></td><td class="r">0</td><td></td><td></td><td class="g"></td><td class="g"></td><td class="g"></td><td class="r">1162:36</td><td class="r">0</td><td></td><td class="r g">39</td><td class="r g">67:41</td><td class="r g">0</td><td class="g"></td></tr>
 <tr><td class="i"></td><td class="g">OK-VYS</td><td class="g">30.10.2012</td><td class="c g"><svg><use href="#e"/></svg></td><td class="n">Vacuum system relief valve filter-...</td><td>Drak</td><td>28.10.2...</td><td>DR cel...</td><td class="r">1180:17</td><td></td><td class="r">0</td><td></td><td></td><td class="g"></td><td class="g">B3-...</td><td class="g"></td><td class="r">1162:36</td><td class="r">0</td><td></td><td class="r g">39</td><td class="r g">17:41</td><td class="r g">0</td><td class="g"></td></tr>
 </table>
 <!-- filter bar -->
 <div class="a" style="left:8px;top:458px;width:1442px;height:25px;background:#cfdcec;border-top:1px solid #8ca6c8;box-sizing:border-box"></div>
 <div class="a" style="left:11px;top:463px;width:17px;height:16px;border:1px solid #93a9c7;box-sizing:border-box;text-align:center;line-height:13px;font-weight:bold;color:#4a5f80;background:#d9e4f1;font-size:9px">✕</div>
 <div class="cb" style="left:33px;top:465px"><svg class="a" style="left:1px;top:1px" width="9" height="9" viewBox="0 0 9 9"><path d="M1 4.500l2.500 3L8 1" stroke="#6a7d96" stroke-width="1.500" fill="none"/></svg></div>
 <div class="t" style="left:49px;top:466px">[Stav] = 'Překročený limit'</div>
 <div class="a" style="left:175px;top:463px;width:17px;height:17px;border:1px solid #93a9c7;box-sizing:border-box;background:#d9e4f1"><svg class="a" style="left:3px;top:6px;color:#5a6f8e" width="9" height="5"><use href="#ar"/></svg></div>
 <div class="a" style="left:1379px;top:462px;width:67px;height:18px;border:1px solid #93a9c7;box-sizing:border-box;text-align:center;line-height:18px">Editovat filtr</div>
 <!-- h scroll -->
 <div class="a" style="left:8px;top:483px;width:1442px;height:17px;background:#d6e2f0;border-bottom:2px solid #8ca6c8;box-sizing:content-box"></div>
 <div class="a" style="left:15px;top:487px;width:0;height:0;border:5px solid transparent;border-right:6px solid #3f5476;border-left:0"></div>
 <div class="a" style="left:1438px;top:487px;width:0;height:0;border:5px solid transparent;border-left:6px solid #3f5476;border-right:0"></div>
 <div class="sb" style="left:25px;top:484px;width:1156px;height:15px;background:linear-gradient(#e8eff8,#cddcee)"></div>
 <div class="a" style="left:599px;top:488px;width:7px;height:7px;border-left:1px solid #8ca6c8;border-right:1px solid #8ca6c8"><div style="width:1px;height:7px;margin-left:2px;background:#8ca6c8"></div></div>
 <!-- v scroll -->
 <div class="a" style="left:1450px;top:59px;width:17px;height:441px;background:linear-gradient(#bfd0e5 0,#bfd0e5 46px,#d6e2f0 46px)"></div>
 <svg class="a" style="left:1453px;top:65px;color:#4a5f80;transform:rotate(180deg)" width="10" height="6"><use href="#ar"/></svg>
 <svg class="a" style="left:1453px;top:472px;color:#4a5f80" width="10" height="6"><use href="#ar"/></svg>
 <div class="sb" style="left:1451px;top:76px;width:15px;height:342px"></div>
 <div class="a" style="left:1454px;top:244px;width:8px;height:5px;border-top:1px solid #8ca6c8;border-bottom:1px solid #8ca6c8"><div style="height:1px;margin-top:1px;background:#8ca6c8"></div></div>
 <!-- status -->
 <div class="a" style="left:7px;top:502px;width:1460px;height:22px;background:linear-gradient(#e1e9f4,#b9cbe2);border-top:1px solid #f2f6fb;box-sizing:border-box"></div>
 <div class="t" style="left:11px;top:508px;font-size:11.6px">Počet záznamů:</div>
 <div class="t" style="left:104px;top:508px;font-size:12px">15/51</div>
 <div class="a" style="left:141px;top:503px;width:1px;height:20px;background:#a7bbd4;border-right:1px solid #eef3f9"></div>
</div>

<!-- DIALOG -->
<div class="win" style="left:668px;top:211px;width:463px;height:306px;z-index:5;border-radius:6px 6px 3px 3px;border-color:#1e2a3a;background:linear-gradient(#b9cfe8 0,#a8c3e3 30%,#6a93c8 32%,#6a93c8 100%)">
 <div class="a" style="left:0;top:0;width:100%;height:29px;background:linear-gradient(90deg,#9db8da 0,#bccfe6 190px,#89a8d3 210px,#6d94c7 260px,#4d77ad 270px,#7399ca 300px,#7a9ecf 460px)"></div>
 <div class="t" style="left:7px;top:8px;font-size:11.8px;color:#000">Nastavení jiných hranic upozornění</div>
 <div class="a" style="left:408px;top:-1px;width:47px;height:20px;border:1px solid #6b2c24;border-top:0;border-radius:0 0 4px 4px;box-sizing:border-box;background:linear-gradient(#d98a80,#b73426 60%,#c05a4d)"><div class="t" style="left:20px;top:3px;font:bold 13px/13px 'Liberation Sans',sans-serif;color:#fff">X</div></div>
 <div class="a" style="left:6px;top:28px;width:450px;height:271px;background:#cfdcec;border:1px solid #2f4159;box-sizing:border-box"></div>
 <div class="t" style="left:18px;top:43px;line-height:13px;color:#1e395b;letter-spacing:-.04px">Limity jednotlivých typů kontrol nastavené v tomto okně se sčítají s limity<br>nastavenými na kartách letadel.</div>
 <div class="t" style="left:18px;top:82px;letter-spacing:-.1px">Spuštěním kontroly dojde k vymazání výsledků všech předchozích kontrol.</div>
 <div class="t" style="left:20px;top:98px;width:372px;height:15px;border:1px dotted #1a3f7a;color:#1f4e9c;text-decoration:underline;line-height:16px;letter-spacing:-.03px">Neprovádět novou kontrolu, pouze zobrazit výsledky poslední kontroly.</div>
 <div class="t" style="left:18px;top:138px">Počet dnů</div>
 <div class="t" style="left:18px;top:164px">Počet přistání</div>
 <div class="t" style="left:18px;top:190px">Počet hodin</div>
 <div class="t" style="left:18px;top:216px">Počet cyklů</div>
 <div class="in" style="left:114px;top:133px;width:129px;text-align:right;padding-right:19px;border-color:#93a9c7">10</div>
 <div class="in" style="left:114px;top:159px;width:129px;text-align:right;padding-right:19px;border-color:#93a9c7">20</div>
 <div class="in" style="left:114px;top:185px;width:129px;text-align:right;padding-right:19px;border-color:#93a9c7">100</div>
 <div class="in" style="left:114px;top:211px;width:129px;text-align:right;padding-right:19px;border-color:#93a9c7">20</div>
 <div class="a" style="left:226px;top:134px;width:16px;height:18px;background:linear-gradient(#eaf1f9,#d3e1f1);border-left:1px solid #a9bfd9;font:7px/9px 'Liberation Sans',sans-serif;text-align:center;color:#55698a">▴<br>▾</div>
 <div class="a" style="left:226px;top:160px;width:16px;height:18px;background:linear-gradient(#eaf1f9,#d3e1f1);border-left:1px solid #a9bfd9;font:7px/9px 'Liberation Sans',sans-serif;text-align:center;color:#55698a">▴<br>▾</div>
 <div class="a" style="left:226px;top:186px;width:16px;height:18px;background:linear-gradient(#eaf1f9,#d3e1f1);border-left:1px solid #a9bfd9;font:7px/9px 'Liberation Sans',sans-serif;text-align:center;color:#55698a">▴<br>▾</div>
 <div class="a" style="left:226px;top:212px;width:16px;height:18px;background:linear-gradient(#eaf1f9,#d3e1f1);border-left:1px solid #a9bfd9;font:7px/9px 'Liberation Sans',sans-serif;text-align:center;color:#55698a">▴<br>▾</div>
 <div class="t" style="left:248px;top:138px">dnů</div>
 <div class="t" style="left:248px;top:164px">přistání</div>
 <div class="t" style="left:248px;top:190px">hodin</div>
 <div class="t" style="left:248px;top:216px">cyklů</div>
 <div class="cb" style="left:20px;top:270px"><svg class="a" style="left:1px;top:1px" width="9" height="9" viewBox="0 0 9 9"><path d="M1 4.500l2.500 3L8 1" stroke="#6a7d96" stroke-width="1.500" fill="none"/></svg></div>
 <div class="t" style="left:36px;top:271px">Zobrazit pouze limity, které nevyhovují</div>
 <div class="b" style="left:249px;top:262px;width:111px;height:23px;font-weight:bold;font-size:11.9px;border:1px solid #fff;outline:1px solid #a9bfd9;outline-offset:-2px;line-height:23px">Spustit kontrolu</div>
 <div class="b" style="left:367px;top:262px;width:75px;height:23px;line-height:24px">Storno</div>
</div>
</body></html>
